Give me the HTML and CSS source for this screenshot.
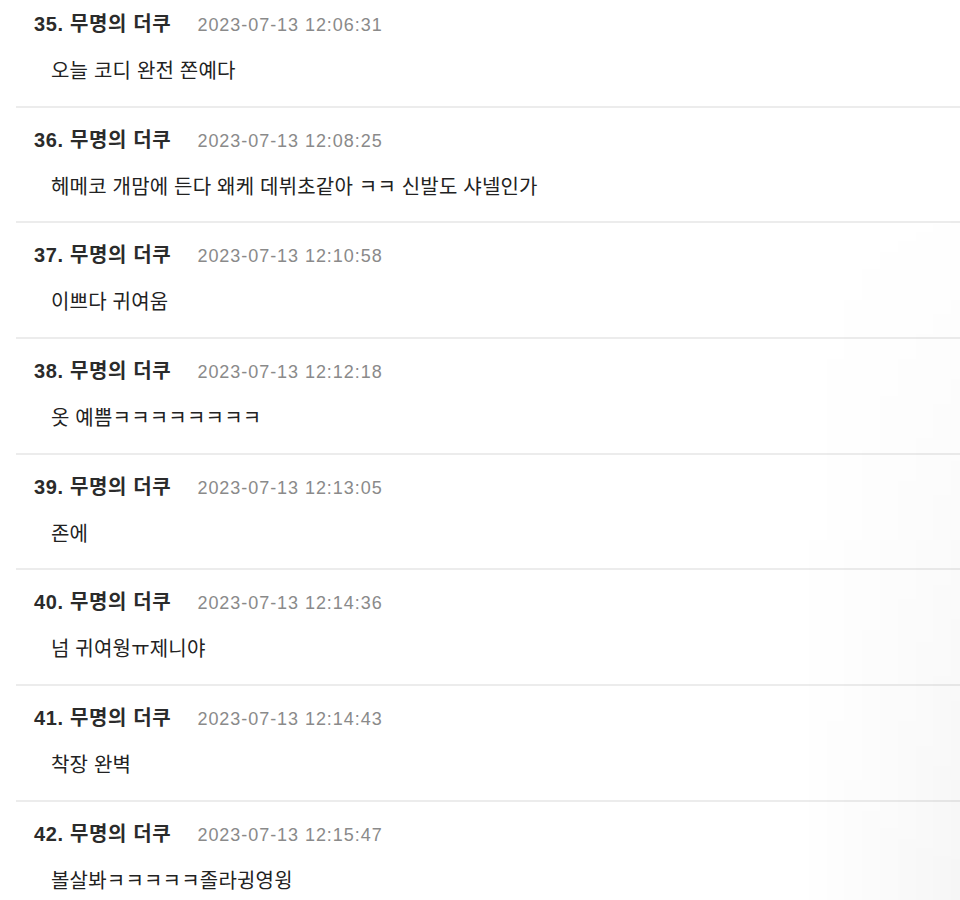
FILE: index.html
```html
<!DOCTYPE html>
<html lang="ko">
<head>
<meta charset="utf-8">
<link rel="stylesheet" href="styles.css">
</head>
<body>
<div class="page">
  <ul class="comments">
    <li class="comment">
      <div class="head"><span class="author">35. 무명의 더쿠</span><span class="date">2023-07-13 12:06:31</span></div>
      <div class="body">오늘 코디 완전 쫀예다</div>
    </li>
    <li class="comment">
      <div class="head"><span class="author">36. 무명의 더쿠</span><span class="date">2023-07-13 12:08:25</span></div>
      <div class="body">헤메코 개맘에 든다 왜케 데뷔초같아 ㅋㅋ 신발도 샤넬인가</div>
    </li>
    <li class="comment">
      <div class="head"><span class="author">37. 무명의 더쿠</span><span class="date">2023-07-13 12:10:58</span></div>
      <div class="body">이쁘다 귀여움</div>
    </li>
    <li class="comment">
      <div class="head"><span class="author">38. 무명의 더쿠</span><span class="date">2023-07-13 12:12:18</span></div>
      <div class="body">옷 예쁨ㅋㅋㅋㅋㅋㅋㅋㅋ</div>
    </li>
    <li class="comment">
      <div class="head"><span class="author">39. 무명의 더쿠</span><span class="date">2023-07-13 12:13:05</span></div>
      <div class="body">존에</div>
    </li>
    <li class="comment">
      <div class="head"><span class="author">40. 무명의 더쿠</span><span class="date">2023-07-13 12:14:36</span></div>
      <div class="body">넘 귀여웡ㅠ제니야</div>
    </li>
    <li class="comment">
      <div class="head"><span class="author">41. 무명의 더쿠</span><span class="date">2023-07-13 12:14:43</span></div>
      <div class="body">착장 완벽</div>
    </li>
    <li class="comment">
      <div class="head"><span class="author">42. 무명의 더쿠</span><span class="date">2023-07-13 12:15:47</span></div>
      <div class="body">볼살봐ㅋㅋㅋㅋㅋ졸라귕영윙</div>
    </li>
  </ul>
  <div class="shade"></div>
</div>
</body>
</html>
```

FILE: styles.css
```css
html, body {
  margin: 0;
  padding: 0;
  background: #ffffff;
}

body {
  font-family: "Liberation Sans", "Noto Sans CJK KR", sans-serif;
  color: #222222;
  width: 960px;
  height: 900px;
  overflow: hidden;
}

.page {
  position: relative;
  width: 960px;
  height: 900px;
  overflow: hidden;
}

.comments {
  list-style: none;
  margin: 0 0 0 16px;
  padding: 0;
}

.comment {
  padding: 18px 0 20.67px 18px;
  border-bottom: 2px solid #ececec;
}

.comment:first-child {
  padding-top: 10px;
}

.head {
  display: flex;
  align-items: baseline;
  gap: 26px;
  height: 28px;
  line-height: 29px;
}

.author {
  font-size: 20px;
  font-weight: bold;
  letter-spacing: 0.65px;
  color: #2b2b2b;
}

.date {
  font-size: 18px;
  color: #8a8a8a;
  letter-spacing: 0.95px;
}

.body {
  margin-top: 19px;
  padding-left: 17px;
  font-size: 20px;
  letter-spacing: 0.2px;
  line-height: 29px;
  height: 28px;
  color: #222222;
}

.shade {
  position: absolute;
  top: 0;
  right: 0;
  width: 160px;
  height: 900px;
  background: linear-gradient(to right, rgba(0,0,0,0) 0%, rgba(0,0,0,0.035) 100%);
  -webkit-mask-image: linear-gradient(to bottom, rgba(0,0,0,0) 20%, rgba(0,0,0,1) 100%);
  mask-image: linear-gradient(to bottom, rgba(0,0,0,0) 20%, rgba(0,0,0,1) 100%);
  pointer-events: none;
}
```
